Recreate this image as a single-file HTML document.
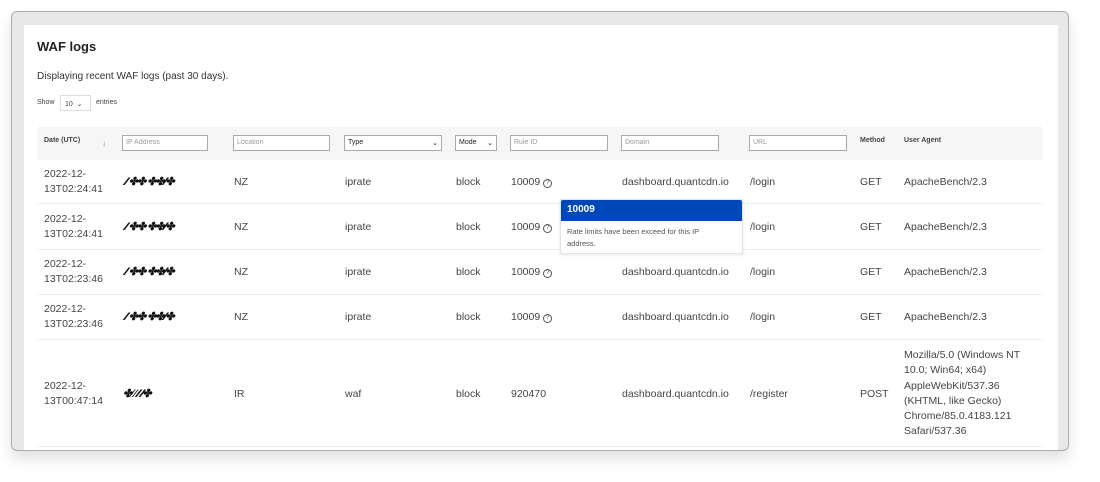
<!DOCTYPE html>
<html><head><meta charset="utf-8"><style>
*{margin:0;padding:0;box-sizing:border-box}
body{width:1100px;height:482px;background:#fff;font-family:"Liberation Sans",sans-serif;position:relative;overflow:hidden;color:#333}
.win{position:absolute;left:11px;top:11px;width:1058px;height:440px;background:#e8e8e8;border:1px solid #a9adb3;border-radius:6px;box-shadow:0 8px 14px rgba(0,0,0,.12);overflow:hidden}
.panel{position:absolute;left:12px;top:13px;width:1034px;height:440px;background:#fff}
.w{position:absolute;left:-12px;top:-12px;width:1100px;height:482px}
.a{position:absolute;white-space:nowrap}
h1{position:absolute;left:25px;top:26px;font-size:13px;font-weight:bold;color:#222}
.hd{position:absolute;left:25px;top:114px;width:1006px;height:33px;background:#f6f6f6}
.inp{position:absolute;height:16px;border:1px solid #aaa;background:#fff;font-size:7px;color:#999;padding:3px 3px;top:122px}
.sel{color:#222}
.c{position:absolute;font-size:10.5px;color:#444;line-height:15px}
.ln{position:absolute;left:25px;width:1006px;height:1px;background:#eee}
.ip{position:absolute;font-size:11px;font-weight:bold;font-style:italic;color:#111;letter-spacing:-1px}
.q{display:inline-block;width:9px;height:9px;border:1px solid #555;border-radius:50%;font-size:6px;text-align:center;line-height:7px;vertical-align:1px;margin-left:3px}
</style></head><body>
<div class="win"><div class="panel"><div class="w">
<h1>WAF logs</h1>
<div class="a" style="left:25px;top:58px;font-size:10px;color:#333">Displaying recent WAF logs (past 30 days).</div>
<div class="a" style="left:25px;top:86px;font-size:7px;color:#444">Show</div>
<div class="a" style="left:48px;top:82px;width:31px;height:16px;border:1px solid #ddd;font-size:7px;padding:4px 4px;color:#444">10 &nbsp;⌄</div>
<div class="a" style="left:84px;top:86px;font-size:7px;color:#444">entries</div>
<div class="hd"></div>
<div class="a" style="left:32px;top:124px;font-size:7px;font-weight:bold;color:#444">Date (UTC)</div>
<div class="a" style="left:90px;top:126px;font-size:8px;color:#888">↓</div>
<div class="inp" style="left:110px;width:86px">IP Address</div>
<div class="inp" style="left:221px;width:97px">Location</div>
<div class="inp sel" style="left:332px;width:98px">Type<span style="float:right">⌄</span></div>
<div class="inp sel" style="left:443px;width:42px">Mode <span style="float:right">⌄</span></div>
<div class="inp" style="left:498px;width:98px">Rule ID</div>
<div class="inp" style="left:609px;width:98px">Domain</div>
<div class="inp" style="left:737px;width:98px">URL</div>
<div class="a" style="left:848px;top:124px;font-size:7px;font-weight:bold;color:#444">Method</div>
<div class="a" style="left:892px;top:124px;font-size:7px;font-weight:bold;color:#444">User Agent</div>

<div class="ln" style="top:190px"></div>
<div class="ln" style="top:236px"></div>
<div class="ln" style="top:281px"></div>
<div class="ln" style="top:326px"></div>
<div class="ln" style="top:433px"></div>

<div class="c" style="left:32px;top:154px">2022-12-<br>13T02:24:41</div>
<div class="ip" style="left:113px;top:162px">⁄⁄ ✤✤ ✤✤⁄⁄✤</div>
<div class="c" style="left:222px;top:162px">NZ</div><div class="c" style="left:333px;top:162px">iprate</div><div class="c" style="left:444px;top:162px">block</div>
<div class="c" style="left:499px;top:162px">10009<span class="q">?</span></div><div class="c" style="left:610px;top:162px">dashboard.quantcdn.io</div><div class="c" style="left:738px;top:162px">/login</div><div class="c" style="left:848px;top:162px">GET</div><div class="c" style="left:892px;top:162px">ApacheBench/2.3</div>

<div class="c" style="left:32px;top:199px">2022-12-<br>13T02:24:41</div>
<div class="ip" style="left:113px;top:207px">⁄⁄ ✤✤ ✤✤⁄⁄✤</div>
<div class="c" style="left:222px;top:207px">NZ</div><div class="c" style="left:333px;top:207px">iprate</div><div class="c" style="left:444px;top:207px">block</div>
<div class="c" style="left:499px;top:207px">10009<span class="q">?</span></div><div class="c" style="left:738px;top:207px">/login</div><div class="c" style="left:848px;top:207px">GET</div><div class="c" style="left:892px;top:207px">ApacheBench/2.3</div>

<div class="c" style="left:32px;top:244px">2022-12-<br>13T02:23:46</div>
<div class="ip" style="left:113px;top:252px">⁄⁄ ✤✤ ✤✤⁄⁄✤</div>
<div class="c" style="left:222px;top:252px">NZ</div><div class="c" style="left:333px;top:252px">iprate</div><div class="c" style="left:444px;top:252px">block</div>
<div class="c" style="left:499px;top:252px">10009<span class="q">?</span></div><div class="c" style="left:610px;top:252px">dashboard.quantcdn.io</div><div class="c" style="left:738px;top:252px">/login</div><div class="c" style="left:848px;top:252px">GET</div><div class="c" style="left:892px;top:252px">ApacheBench/2.3</div>

<div class="c" style="left:32px;top:289px">2022-12-<br>13T02:23:46</div>
<div class="ip" style="left:113px;top:297px">⁄⁄ ✤✤ ✤✤⁄⁄✤</div>
<div class="c" style="left:222px;top:297px">NZ</div><div class="c" style="left:333px;top:297px">iprate</div><div class="c" style="left:444px;top:297px">block</div>
<div class="c" style="left:499px;top:297px">10009<span class="q">?</span></div><div class="c" style="left:610px;top:297px">dashboard.quantcdn.io</div><div class="c" style="left:738px;top:297px">/login</div><div class="c" style="left:848px;top:297px">GET</div><div class="c" style="left:892px;top:297px">ApacheBench/2.3</div>

<div class="c" style="left:32px;top:366px">2022-12-<br>13T00:47:14</div>
<div class="ip" style="left:111px;top:374px">✤⁄ ⁄ ⁄⁄ ⁄⁄✤</div>
<div class="c" style="left:222px;top:374px">IR</div><div class="c" style="left:333px;top:374px">waf</div><div class="c" style="left:444px;top:374px">block</div>
<div class="c" style="left:499px;top:374px">920470</div><div class="c" style="left:610px;top:374px">dashboard.quantcdn.io</div><div class="c" style="left:738px;top:374px">/register</div><div class="c" style="left:848px;top:374px">POST</div>
<div class="c" style="left:892px;top:335px;width:125px;line-height:15.3px;white-space:normal">Mozilla/5.0 (Windows NT 10.0; Win64; x64) AppleWebKit/537.36 (KHTML, like Gecko) Chrome/85.0.4183.121 Safari/537.36</div>

<div class="a" style="left:548px;top:186px;width:183px;height:55px;background:#fff;border:1px solid #e4e4e4;box-shadow:0 1px 3px rgba(0,0,0,.1)">
<div style="background:#0047b8;color:#fff;font-size:10px;font-weight:bold;padding:4px 6px;height:21px;border-radius:2px 2px 0 0">10009</div>
<div style="font-size:7.5px;color:#555;padding:5px 6px;line-height:12px;white-space:normal;width:150px">Rate limits have been exceed for this IP address.</div>
</div>
</div></div></div>
</body></html>
